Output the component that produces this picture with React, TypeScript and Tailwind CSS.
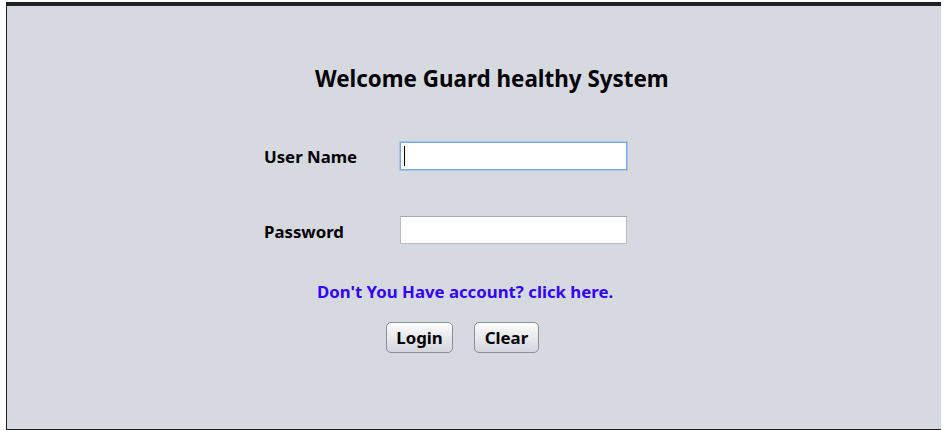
export default function App() {
  const font = { fontFamily: '"Noto Sans", "Open Sans", sans-serif' };

  return (
    <div className="w-[946px] h-[430px] bg-white overflow-hidden pt-[2px] pl-[6px]" style={font}>
      <div className="w-[935px] h-[428px] border-t-4 border-l border-b border-[#1f1f1f] bg-[#d6d9df] flex flex-col text-black">
        {/* title */}
        <h1 className="mt-[58px] ml-[308px] text-[22.4px] leading-[30px] font-bold">
          Welcome Guard healthy System
        </h1>

        {/* user name */}
        <div className="mt-[48px] ml-[257px] flex items-center h-[28px]">
          <label className="w-[136px] mt-[2px] text-[16.8px] leading-6 font-bold">User Name</label>
          <div className="relative w-[227px] h-[28px] bg-white border border-[#7fa6d6] outline outline-1 outline-[#a9c3e4]">
            <span className="absolute left-[3px] top-[3px] w-px h-[20px] bg-black" />
          </div>
        </div>

        {/* password */}
        <div className="mt-[46px] ml-[257px] flex items-center h-[28px]">
          <label className="w-[136px] mt-[3px] text-[16.8px] leading-6 font-bold">Password</label>
          <div className="w-[227px] h-[28px] bg-white border border-[#b9bcc1] border-t-[#a4a7ac]" />
        </div>

        {/* register link */}
        <a className="mt-[36px] ml-[310px] text-[16.8px] leading-6 font-bold text-[#3300ff] cursor-pointer">
          Don't You Have account? click here.
        </a>

        {/* buttons */}
        <div className="mt-[18px] ml-[379px] flex gap-[21px]">
          <button className="w-[67px] h-[31px] rounded-[5px] border border-[#8c8e92] bg-gradient-to-b from-[#fcfcfd] to-[#d3d6dc] text-[16.8px] font-bold flex items-center justify-center">
            Login
          </button>
          <button className="w-[65px] h-[31px] rounded-[5px] border border-[#8c8e92] bg-gradient-to-b from-[#fcfcfd] to-[#d3d6dc] text-[16.8px] font-bold flex items-center justify-center">
            Clear
          </button>
        </div>
      </div>
    </div>
  );
}
